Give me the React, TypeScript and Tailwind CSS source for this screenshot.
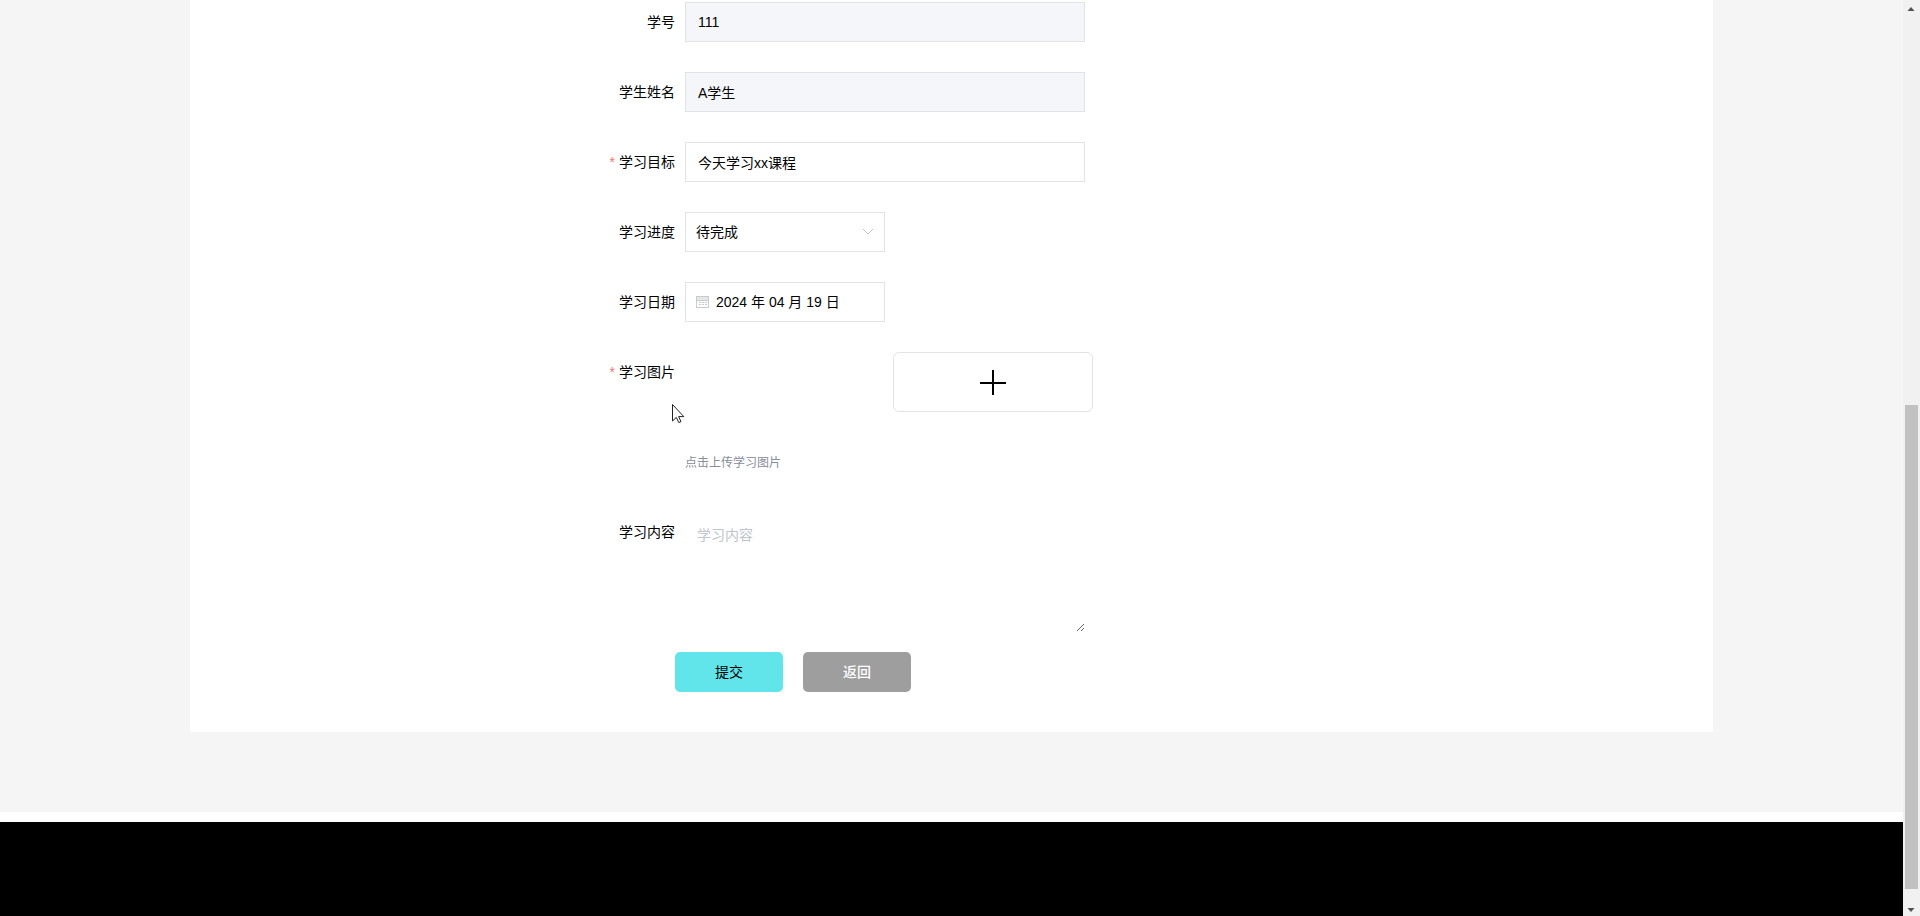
import type { ReactNode } from "react";

const control =
  "h-10 border border-[#e2e3e7] text-sm text-black outline-none rounded-none";

function Row({
  label,
  htmlFor,
  required = false,
  children,
}: {
  label: string;
  htmlFor: string;
  required?: boolean;
  children: ReactNode;
}) {
  return (
    <div className="flex items-start gap-2.5">
      <label
        htmlFor={htmlFor}
        className="w-[70px] shrink-0 text-right text-sm leading-10 whitespace-nowrap text-black"
      >
        {required && <span className="mr-1 text-[#f27378]">*</span>}
        {label}
      </label>
      {children}
    </div>
  );
}

function CalendarIcon() {
  return (
    <svg
      viewBox="0 0 14 14"
      className="pointer-events-none h-3.5 w-3.5 shrink-0"
      fill="none"
      stroke="#c8cacd"
      shapeRendering="crispEdges"
    >
      <path d="M.5 1.5h12v11h-12z" />
      <path d="M1 3.500h11" stroke="#e6e7e9" strokeWidth="3" />
      <path d="M1 5.500h11" />
      <path d="M3 7.500h2M6 7.500h2M9 7.500h2M3 9.500h2M6 9.500h2M9 9.500h2" />
    </svg>
  );
}

function ScrollBar() {
  return (
    <div className="flex w-[17px] shrink-0 flex-col items-center bg-[#f1f1f1]" aria-hidden="true">
      <svg viewBox="0 0 17 17" className="h-[17px] w-[17px]" fill="#505050">
        <path d="M4.500 11h7L8 7z" />
      </svg>
      <div className="flex-[388]" />
      <div className="w-[13px] flex-[484] bg-[#c1c1c1]" />
      <div className="flex-[10]" />
      <svg viewBox="0 0 17 17" className="h-[17px] w-[17px]" fill="#505050">
        <path d="M4.500 9h7L8 13z" />
      </svg>
    </div>
  );
}

export default function App() {
  return (
    <div className="flex min-h-screen font-['Liberation_Sans','Noto_Sans_CJK_SC',sans-serif]">
      <div className="flex flex-1 flex-col bg-white">
        <main className="bg-[#f5f5f5] pb-20">
          <div className="mx-auto w-4/5 bg-white pt-0.5 pb-10">
            <form
              className="relative mx-auto w-[693px] max-w-full"
              onSubmit={(e) => e.preventDefault()}
            >
              <div className="flex flex-col gap-[30px]">
                <Row label="学号" htmlFor="no">
                  <input id="no" readOnly defaultValue="111" className={`${control} w-[400px] bg-[#f5f6fa] px-3`} />
                </Row>
                <Row label="学生姓名" htmlFor="name">
                  <input id="name" readOnly defaultValue="A学生" className={`${control} w-[400px] bg-[#f5f6fa] px-3`} />
                </Row>
                <Row label="学习目标" htmlFor="goal" required>
                  <input id="goal" defaultValue="今天学习xx课程" className={`${control} w-[400px] bg-white px-3`} />
                </Row>
                <Row label="学习进度" htmlFor="progress">
                  <div className="relative">
                    <select
                      id="progress"
                      defaultValue="待完成"
                      className={`${control} w-[200px] appearance-none bg-white px-2.5`}
                    >
                      <option>待完成</option>
                      <option>已完成</option>
                    </select>
                    <svg
                      viewBox="0 0 12 8"
                      className="pointer-events-none absolute top-4 right-[11px] h-2 w-3"
                      fill="none"
                      stroke="#c0c4cc"
                    >
                      <path d="M1 1l5 5 5-5" />
                    </svg>
                  </div>
                </Row>
                <Row label="学习日期" htmlFor="date">
                  <div className={`${control} flex w-[200px] items-center gap-1.5 bg-white px-2.5`}>
                    <CalendarIcon />
                    <input
                      id="date"
                      defaultValue="2024 年 04 月 19 日"
                      className="w-full min-w-0 bg-transparent text-sm outline-none"
                    />
                  </div>
                </Row>
                <Row label="学习图片" htmlFor="picture" required>
                  <div className="flex flex-col gap-8">
                    <button
                      id="picture"
                      type="button"
                      aria-label="学习图片"
                      className="ml-52 flex h-[60px] w-[200px] items-center justify-center rounded-md border border-[#e2e3e7] bg-white"
                    >
                      <svg viewBox="0 0 26 26" className="h-[26px] w-[26px]" stroke="#000" strokeWidth="2">
                        <path d="M13 1v25M0 14h26" />
                      </svg>
                    </button>
                    <p className="text-xs leading-[38px] text-[#888c9b]">点击上传学习图片</p>
                  </div>
                </Row>
                <Row label="学习内容" htmlFor="content">
                  <textarea
                    id="content"
                    placeholder="学习内容"
                    className="block h-[120px] w-[400px] resize border-0 bg-white p-3 text-sm leading-[22px] text-black outline-none placeholder:text-[#c0c4cc]"
                  />
                </Row>
              </div>
              <div className="mt-5 ml-[70px] flex gap-5">
                <button type="submit" className="h-10 w-[108px] rounded-[5px] bg-[#62e5ea] text-sm text-black">
                  提交
                </button>
                <button type="button" className="h-10 w-[108px] rounded-[5px] bg-[#9e9e9e] text-sm font-medium text-white">
                  返回
                </button>
              </div>
              <svg
                viewBox="0 0 13 20"
                className="pointer-events-none absolute top-[402px] left-[67px] h-5 w-[13px]"
                fill="#fff"
                stroke="#222"
                aria-hidden="true"
              >
                <path d="M.5 .5v16.500l3.800-3.600 2.500 5.200 2.200-1-2.400-5h5.200z" />
              </svg>
            </form>
          </div>
        </main>
        <footer className="mt-2.5 min-h-20 flex-1 bg-black" />
      </div>
      <ScrollBar />
    </div>
  );
}
